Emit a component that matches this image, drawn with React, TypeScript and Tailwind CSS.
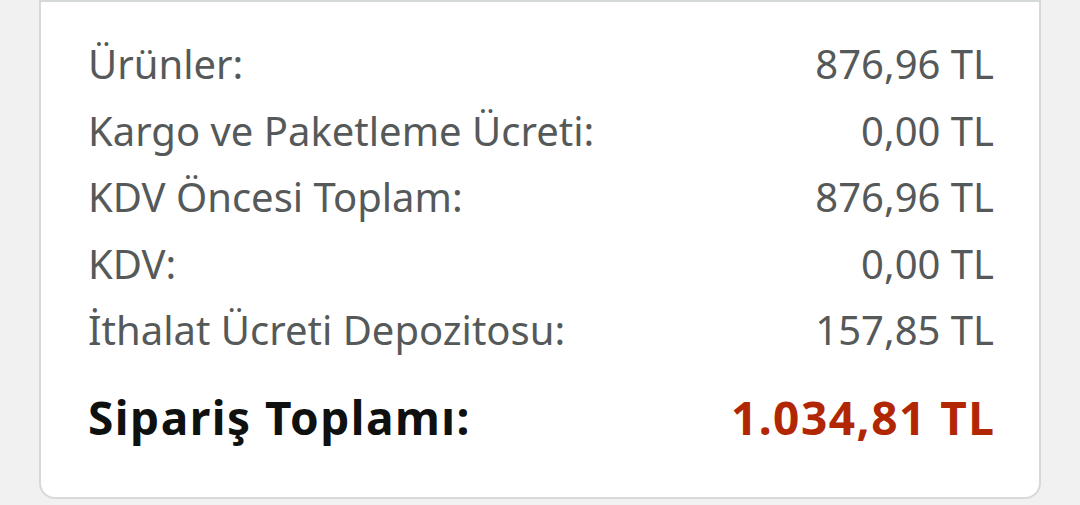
export default function App() {
  const rows = [
    ["Ürünler:", "876,96 TL"],
    ["Kargo ve Paketleme Ücreti:", "0,00 TL"],
    ["KDV Öncesi Toplam:", "876,96 TL"],
    ["KDV:", "0,00 TL"],
    ["İthalat Ücreti Depozitosu:", "157,85 TL"],
  ];
  return (
    <div className="w-[1080px] h-[505px] bg-[#f1f1f1] px-[39px] overflow-hidden" style={{ fontFamily: '"Noto Sans", sans-serif' }}>
      <div className="h-[499px] bg-white border-2 border-[#d5d9d9] rounded-b-[16px] pl-[47px] pr-[45px] pt-[29px]">
        <div className="flex flex-col">
          {rows.map(([l, v]) => (
            <div key={l} className="flex justify-between items-center h-[66.5px] text-[40px] leading-none text-[#565959]">
              <span>{l}</span>
              <span>{v}</span>
            </div>
          ))}
        </div>
        <div className="flex justify-between items-center h-[66px] mt-[20px] text-[46px] leading-none font-bold tracking-[1.5px]">
          <span className="text-[#0f1111]">Sipariş Toplamı:</span>
          <span className="text-[#b12704] -mr-[1.5px]">1.034,81 TL</span>
        </div>
      </div>
    </div>
  );
}
